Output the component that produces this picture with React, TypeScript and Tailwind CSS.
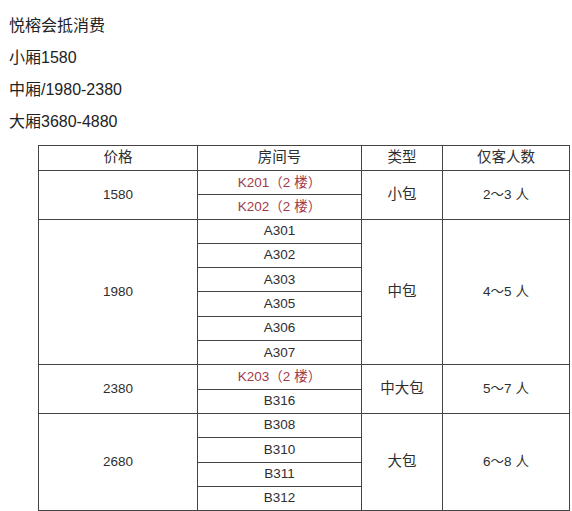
import React from "react";

type Group = {
  price: string;
  rooms: { name: string; red?: boolean }[];
  type: string;
  people: string;
};

const groups: Group[] = [
  {
    price: "1580",
    rooms: [
      { name: "K201（2 楼）", red: true },
      { name: "K202（2 楼）", red: true },
    ],
    type: "小包",
    people: "2～3 人",
  },
  {
    price: "1980",
    rooms: ["A301", "A302", "A303", "A305", "A306", "A307"].map((n) => ({ name: n })),
    type: "中包",
    people: "4～5 人",
  },
  {
    price: "2380",
    rooms: [{ name: "K203（2 楼）", red: true }, { name: "B316" }],
    type: "中大包",
    people: "5～7 人",
  },
  {
    price: "2680",
    rooms: ["B308", "B310", "B311", "B312"].map((n) => ({ name: n })),
    type: "大包",
    people: "6～8 人",
  },
];

const cell = "border-[1.5px] border-[#444] p-0 text-center align-middle";

export default function App() {
  return (
    <div
      className="w-[572px] h-[511px] bg-white overflow-hidden text-[#222]"
      style={{ fontFamily: '"Liberation Sans", "Noto Sans CJK SC", sans-serif' }}
    >
      <div className="pl-[9px] pt-[16px] text-[16px] leading-[20px] flex flex-col gap-[12px]">
        <p>悦榕会抵消费</p>
        <p>小厢1580</p>
        <p>中厢/1980-2380</p>
        <p>大厢3680-4880</p>
      </div>

      <table className="ml-[38px] mt-[13px] border-collapse table-fixed w-[531px] text-[13.5px] text-[#2e2e2e]">
        <colgroup>
          <col className="w-[159px]" />
          <col className="w-[164px]" />
          <col className="w-[81px]" />
          <col className="w-[127px]" />
        </colgroup>
        <thead>
          <tr className="h-[25px]">
            <th className={`${cell} font-normal text-[14.5px]`}>价格</th>
            <th className={`${cell} font-normal text-[14.5px]`}>房间号</th>
            <th className={`${cell} font-normal text-[14.5px]`}>类型</th>
            <th className={`${cell} font-normal text-[14.5px]`}>仅客人数</th>
          </tr>
        </thead>
        <tbody>
          {groups.map((g) =>
            g.rooms.map((r, i) => (
              <tr key={g.price + r.name} className="h-[24.3px]">
                {i === 0 && (
                  <td rowSpan={g.rooms.length} className={cell}>
                    {g.price}
                  </td>
                )}
                <td className={`${cell} ${r.red ? "text-[#a33a48]" : ""}`}>{r.name}</td>
                {i === 0 && (
                  <td rowSpan={g.rooms.length} className={`${cell} text-[14.5px]`}>
                    {g.type}
                  </td>
                )}
                {i === 0 && (
                  <td rowSpan={g.rooms.length} className={cell}>
                    {g.people}
                  </td>
                )}
              </tr>
            ))
          )}
        </tbody>
      </table>
    </div>
  );
}
